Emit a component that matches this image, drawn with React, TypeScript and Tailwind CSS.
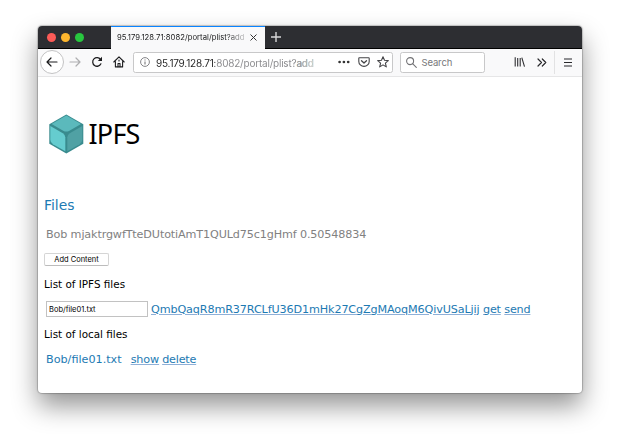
import React from "react";

const link = "text-[#1d7ab3] underline decoration-[#8fb0d8] decoration-1 underline-offset-[1px]";

function TabBar() {
  return (
    <div className="flex h-[22.5px] border-b border-black bg-[#2d2e32] font-['Inter',sans-serif]">
      <div className="flex w-[73px] items-center gap-[4.8px] pt-[2px] pl-[9px]">
        <span className="size-[9px] rounded-full bg-[#fc5b57]" />
        <span className="size-[9px] rounded-full bg-[#fdb62e]" />
        <span className="size-[9px] rounded-full bg-[#28c73f]" />
      </div>
      <div className="-mb-px flex w-[154px] items-center border-t border-[#0a84ff] bg-[#f9f9fa] pl-[6px]">
        <span className="w-[129px] bg-linear-to-r from-[#18191a] from-[108px] to-[#18191a]/20 to-[129px] bg-clip-text text-[7.7px] leading-[12px] tracking-[0.02px] whitespace-nowrap text-transparent">
          95.179.128.71:8082/portal/plist?add
        </span>
        <svg className="ml-[3.5px] size-[7px]" viewBox="0 0 7 7" stroke="#333" strokeWidth="1" fill="none">
          <path d="M.5 .5l6 6M6.5 .5l-6 6" />
        </svg>
      </div>
      <svg className="mt-[6px] ml-[6px] size-[10px]" viewBox="0 0 10 10" stroke="#d8d8d9" strokeWidth="1.400">
        <path d="M5 0v10M0 5h10" />
      </svg>
    </div>
  );
}

function Toolbar() {
  return (
    <div className="flex h-[28.5px] items-center border-b border-[#e6e6e7] bg-[#f9f9fa] font-['Inter',sans-serif]">
      <span className="ml-[2px] flex size-[24px] shrink-0 items-center justify-center rounded-full border border-[#c3c3c4] bg-white">
        <svg width="12" height="10" viewBox="0 0 12 10" fill="none" stroke="#1b1b1d" strokeWidth="1.2" strokeLinecap="round" strokeLinejoin="round">
          <path d="M11 5H1.2M5 1L1 5l4 4" />
        </svg>
      </span>
      <svg className="ml-[4.500px] shrink-0" width="12" height="10" viewBox="0 0 12 10" fill="none" stroke="#aeaeb0" strokeWidth="1.200" strokeLinecap="round" strokeLinejoin="round">
        <path d="M1 5h9.800M7 1l4 4-4 4" />
      </svg>
      <svg className="ml-[10px] shrink-0" width="12" height="12" viewBox="0 0 12 12" fill="none" stroke="#1b1b1d" strokeWidth="1.250">
        <path d="M9.500 3.400A4.300 4.300 0 1 0 9.900 7.800" strokeLinecap="round" />
        <path d="M11 .8v4.200H6.800z" fill="#1b1b1d" stroke="none" />
      </svg>
      <svg className="ml-[10px] shrink-0" width="12" height="12" viewBox="0 0 12 12" fill="none" stroke="#1b1b1d" strokeWidth="1.100" strokeLinecap="round" strokeLinejoin="round">
        <path d="M.8 6L6 .9 11.200 6M2.400 5.500v5.400h7.200V5.500" />
        <path d="M5 10.800V7.500h2v3.300M6 4v1" />
      </svg>
      <div className="ml-[8.500px] flex h-[21px] w-[260px] shrink-0 items-center rounded-[2.500px] border border-[#c8c8c9] bg-white">
        <svg className="ml-[6px] shrink-0" width="10" height="10" viewBox="0 0 10 10" fill="none" stroke="#77777a" strokeWidth=".9">
          <circle cx="5" cy="5" r="4.400" />
          <path d="M5 4.500v3M5 2.500v1" strokeWidth="1.100" />
        </svg>
        <span className="mt-px ml-[6px] w-[166px] bg-linear-to-r from-[#222] from-[58.500px] via-[#88888b] via-[59px] to-[#88888b] to-[59px] bg-clip-text text-[10px] leading-[14px] tracking-[-0.21px] whitespace-nowrap text-transparent">
          95.179.128.71:8082/portal/plist?<span className="text-[#a0a0a3]">a</span><span className="text-[#bcbcbe]">d</span><span className="text-[#dadadb]">d</span>
        </span>
        <svg className="ml-[15.500px] shrink-0" width="12" height="4" viewBox="0 0 12 4" fill="#333">
          <circle cx="1.600" cy="2" r="1.350" /><circle cx="5.900" cy="2" r="1.350" /><circle cx="10.200" cy="2" r="1.350" />
        </svg>
        <svg className="ml-[8px] shrink-0" width="12" height="10" viewBox="0 0 12 10" fill="none" stroke="#444447" strokeWidth="1.100" strokeLinecap="round" strokeLinejoin="round">
          <path d="M1.400.8h9.200q.6 0 .6.600v3A5.100 4.900 0 0 1 .8 4.400v-3q0-.6.600-.6z" />
          <path d="M3.500 3.700L6 6l2.500-2.300" strokeWidth="1.300" />
        </svg>
        <svg className="ml-[7px] shrink-0" width="12" height="12" viewBox="0 0 12 12" fill="none" stroke="#444447" strokeWidth="1.100" strokeLinejoin="round">
          <path d="M6 .8l1.500 3.500 3.800.3-2.900 2.500.9 3.800L6 8.900l-3.300 2 .9-3.800L.7 4.600l3.800-.3z" />
        </svg>
      </div>
      <div className="ml-[6.500px] flex h-[21px] w-[85px] shrink-0 items-center rounded-[2.500px] border border-[#c8c8c9] bg-white">
        <svg className="ml-[5.500px] shrink-0" width="11" height="11" viewBox="0 0 11 11" fill="none" stroke="#727275" strokeWidth="1.100" strokeLinecap="round">
          <circle cx="4.100" cy="4.100" r="3.500" /><path d="M6.800 6.800l3.500 3.500" />
        </svg>
        <span className="mt-px ml-[4.500px] text-[9.500px] leading-[14px] tracking-[-0.15px] text-[#77777a]">Search</span>
      </div>
      <svg className="ml-[29px] shrink-0" width="12" height="10" viewBox="0 0 12 10" fill="none" stroke="#303033" strokeWidth="1.100">
        <path d="M1.200.2v9.400M3.700 1v8.600M6.200 1v8.600M7.800.7l2.700 8.900" />
      </svg>
      <svg className="ml-[11px] shrink-0" width="10" height="9" viewBox="0 0 10 9" fill="none" stroke="#29292c" strokeWidth="1.200" strokeLinecap="round" strokeLinejoin="round">
        <path d="M1 1l3.500 3.500L1 8M5.300 1l3.500 3.500L5.300 8" />
      </svg>
      <span className="ml-[7.500px] h-[23px] w-px shrink-0 bg-[#e2e2e3]" />
      <svg className="ml-[9px] shrink-0" width="8" height="9" viewBox="0 0 8 9" stroke="#29292c" strokeWidth="1.150">
        <path d="M0 1h8M0 4.500h8M0 8h8" />
      </svg>
    </div>
  );
}

function Logo() {
  return (
    <div className="flex h-[40px] items-center pl-[5px]">
      <svg width="35" height="40" viewBox="0 0 35 40">
        <path d="M17.300.5l17 9.700v19.500l-17 9.800L.3 29.700V10.200z" fill="#398b8e" />
        <path d="M17.300 1.600l14.700 8.500-12 6.900q-2.700 1-5.400 0l-12-6.900z" fill="#5bb9bc" />
        <path d="M1.300 12l12.500 7.200q2.300 1.700 2.500 4v14L4 30.200q-2.700-2-2.700-4.500z" fill="#65cccf" />
        <path d="M33.300 12l-12.500 7.200q-2.300 1.700-2.500 4v14l12.300-7q2.700-2 2.700-4.500z" fill="#50a1a4" />
      </svg>
      <span className="ml-[4.500px] font-['Noto_Sans',sans-serif] text-[27px] leading-[40px] tracking-[-0.800px] text-black">IPFS</span>
    </div>
  );
}

export default function App() {
  return (
    <div className="h-[444px] w-[620px] overflow-hidden bg-white pt-[26px] pl-[38px]">
      <div className="h-[367px] w-[543.500px] overflow-hidden rounded-[4px] bg-white shadow-[0_0_0_1px_rgba(0,0,0,0.12),0_0_2px_1px_rgba(0,0,0,0.10),0_13px_26px_rgba(0,0,0,0.42)]">
        <TabBar />
        <Toolbar />
        <main className="flex flex-col pt-[36.500px] pl-[6px] font-['DejaVu_Sans',Verdana,sans-serif]">
          <Logo />
          <h1 className="mt-[41px] h-[20px] text-[13.900px] leading-[20px] text-[#1d7ab3]">Files</h1>
          <p className="mt-[12px] h-[16px] pl-[2px] text-[11.200px] leading-[16px] tracking-[-0.140px] whitespace-nowrap text-[#818181]">Bob mjaktrgwfTteDUtotiAmT1QULd75c1gHmf 0.50548834</p>
          <button className="mt-[10px] h-[13px] w-[65px] rounded-[2px] border border-[#d5d5d5] border-b-[#bcbcbc] bg-white font-['Inter',sans-serif] text-[7.500px] leading-[11px] text-black">Add Content</button>
          <h2 className="mt-[11px] h-[14px] text-[10.400px] leading-[14px] whitespace-nowrap text-black">List of IPFS files</h2>
          <div className="mt-[10px] flex h-[17px] items-center pl-[2px] text-[11.200px] leading-[17px] whitespace-nowrap">
            <input className="mr-[3px] h-[16px] w-[102px] shrink-0 border border-[#c2c2c2] bg-white px-[2px] font-['Inter',sans-serif] text-[7.500px] text-black" defaultValue="Bob/file01.txt" />
            <a className={link + " tracking-[-0.130px]"}>QmbQaqR8mR37RCLfU36D1mHk27CgZgMAoqM6QivUSaLjij</a>
            <a className={link + " ml-[3.500px] tracking-[-0.200px]"}>get</a>
            <a className={link + " ml-[3.500px] tracking-[-0.200px]"}>send</a>
          </div>
          <h2 className="mt-[9px] h-[14px] text-[10.400px] leading-[14px] whitespace-nowrap text-black">List of local files</h2>
          <div className="mt-[10px] flex h-[17px] items-center pl-[2px] text-[11.200px] leading-[17px] whitespace-nowrap text-[#1d7ab3]">
            <span>Bob/file01.txt</span>
            <a className={link + " ml-[9px] tracking-[-0.100px]"}>show</a>
            <a className={link + " ml-[3px] tracking-[-0.200px]"}>delete</a>
          </div>
        </main>
      </div>
    </div>
  );
}
